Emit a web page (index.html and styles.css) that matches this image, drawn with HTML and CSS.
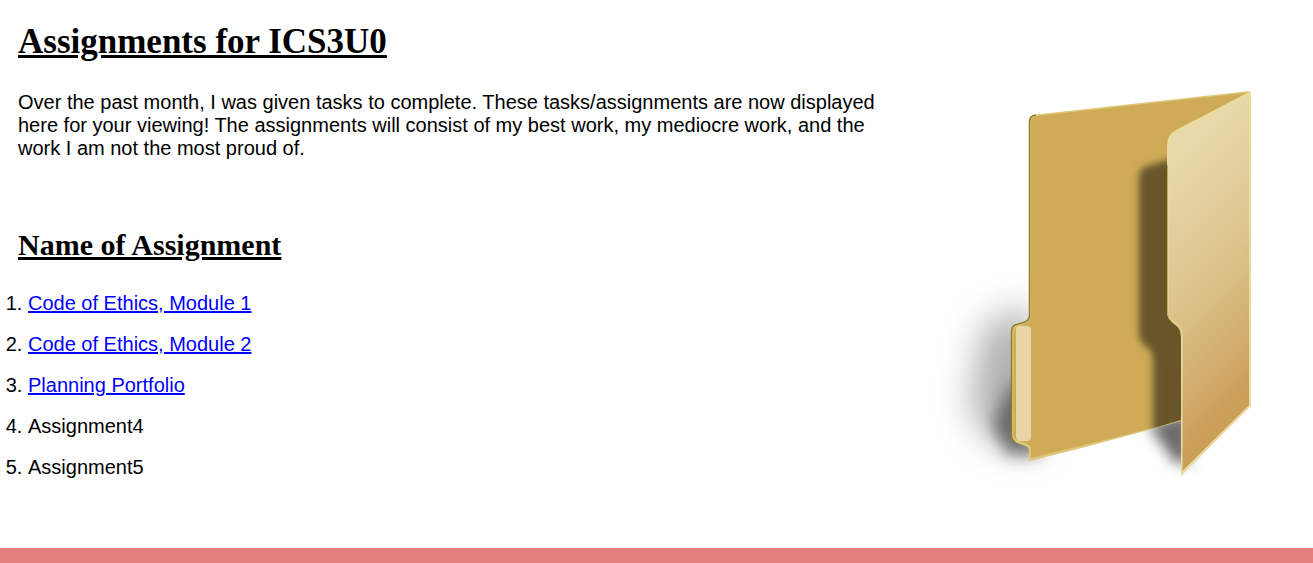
FILE: index.html
```html
<!DOCTYPE html>
<html lang="en">
<head>
<meta charset="utf-8">
<title>Assignments for ICS3U0</title>
<link rel="stylesheet" href="styles.css">
</head>
<body>
<main class="page">
  <section class="content">
    <div class="intro">
      <h1 class="title">Assignments for ICS3U0</h1>
      <p class="lead">Over the past month, I was given tasks to complete. These tasks/assignments are now displayed here for your viewing! The assignments will consist of my best work, my mediocre work, and the work I am not the most proud of.</p>
      <h2 class="subtitle">Name of Assignment</h2>
    </div>
    <ol class="list">
      <li><a href="#">Code of Ethics, Module 1</a></li>
      <li><a href="#">Code of Ethics, Module 2</a></li>
      <li><a href="#">Planning Portfolio</a></li>
      <li>Assignment4</li>
      <li>Assignment5</li>
    </ol>
  </section>
  <aside class="art">
    <svg class="folder" viewBox="920 80 350 410" width="350" height="410" aria-hidden="true">
      <defs>
        <filter id="blurWide" x="-80%" y="-80%" width="260%" height="260%"><feGaussianBlur stdDeviation="18"/></filter>
        <filter id="blurMid" x="-60%" y="-60%" width="220%" height="220%"><feGaussianBlur stdDeviation="8"/></filter>
        <filter id="blurLow" x="-60%" y="-60%" width="220%" height="220%"><feGaussianBlur stdDeviation="7"/></filter>
        <filter id="blurInner" x="-40%" y="-40%" width="180%" height="180%"><feGaussianBlur stdDeviation="3.5"/></filter>
        <linearGradient id="flapFill" gradientUnits="userSpaceOnUse" x1="1100" y1="230" x2="1255" y2="385">
          <stop offset="0" stop-color="#e9d9ab"/>
          <stop offset="0.5" stop-color="#dcc48c"/>
          <stop offset="1" stop-color="#cb9e59"/>
        </linearGradient>
        <clipPath id="backClip"><path d="M1030 122Q1030 115 1037 114L1250 91L1200 140L1181 420C1130 436 1080 447 1030 460V450Q1030 446 1026 445L1016 441Q1012 439 1012 435V332Q1012 327 1016 325L1026 322Q1030 320 1030 315Z"/></clipPath>
      </defs>
      <path class="shadow-soft" filter="url(#blurWide)" d="M1032 305L985 325L970 410L1000 445L1040 445Z"/>
      <path class="shadow-near" filter="url(#blurMid)" d="M1030 375L1012 385L992 425L1008 455L1040 455Z"/>
      <path class="shadow-low" filter="url(#blurLow)" d="M1148 424L1190 412V462L1176 464Z"/>
      <path class="back-light" d="M1029 122Q1029 115 1036 114.500L1250 91L1200 140L1181 421C1130 435 1080 449 1029 461V451Q1029 447 1025 446L1015 442Q1011 440 1011 435V332Q1011 327 1015 325L1025 322Q1029 320 1029 315Z"/>
      <path class="back-dark" d="M1036 115Q1029.500 115.500 1029.500 122V315Q1029.500 320 1025 322L1015 325Q1011.500 327 1011.500 332V435Q1011.500 440 1015 442"/>
      <path class="back" d="M1031 122Q1031 117 1037 116L1250 92.500L1200 140L1181 420C1130 434 1080 446 1031 458V450Q1031 445 1027 444L1017 440Q1013.500 438 1013.500 435V332Q1013.500 328 1017 327L1027 323Q1031 321 1031 315Z"/>
      <g clip-path="url(#backClip)">
        <path class="inner-shadow" filter="url(#blurInner)" d="M1139 176Q1139 168 1148 166L1200 150V470H1153V362Q1153 352 1147 347Q1139 342 1139 334Z"/>
      </g>
      <rect class="tab" x="1016" y="326" width="15" height="115" rx="4"/>
      <path class="flap-edge" d="M1251 91L1176 130Q1167 135 1167 145V312Q1167 318 1172 322L1178 327Q1181 330 1181 334V476L1251 406Z"/>
      <path class="flap-left" d="M1167.500 165V312Q1167.500 318 1172 322L1178 327Q1181 330 1181 336"/>
      <path class="flap" d="M1248 95L1177 132Q1168.500 137 1168.500 146V312Q1168.500 317 1173 321L1179 326Q1182.500 329 1182.500 334V471L1249 405V95Z"/>
    </svg>
  </aside>
</main>
<footer class="bar"></footer>
</body>
</html>
```
FILE: styles.css
```css
html, body {
  margin: 0;
  padding: 0;
  background: #fff;
}
body {
  height: 563px;
  overflow: hidden;
  display: flex;
  flex-direction: column;
  color: #000;
  font-family: "Liberation Sans", Arial, sans-serif;
  font-size: 20px;
}
.page {
  flex: 1;
  display: flex;
  justify-content: space-between;
}
.content {
  width: 880px;
}
.intro {
  padding-left: 18px;
}
.title {
  margin: 0;
  padding-top: 22px;
  font-family: "Liberation Serif", "Times New Roman", serif;
  font-size: 35px;
  line-height: 40px;
  font-weight: 700;
  text-decoration: underline;
}
.lead {
  margin: 29px 0 0;
  line-height: 23px;
}
.subtitle {
  margin: 68px 0 0;
  font-family: "Liberation Serif", "Times New Roman", serif;
  font-size: 30px;
  line-height: 34px;
  font-weight: 700;
  text-decoration: underline;
}
.list {
  margin: 0;
  padding: 12px 0 0 28px;
}
.list li {
  margin-top: 18px;
  line-height: 23px;
}
.list a {
  color: #00f;
}
.art {
  padding: 80px 43px 0 0;
}
.folder {
  display: block;
}
.bar {
  height: 15px;
  flex: none;
  background: #e27f7a;
}
.shadow-soft { fill: #777; opacity: 0.6; }
.shadow-near { fill: #444; opacity: 0.7; }
.shadow-low { fill: #444; opacity: 0.8; }
.back-light { fill: #dcc878; }
.back-dark { fill: none; stroke: #8f7d28; stroke-width: 1.500; }
.back { fill: #cfaa57; }
.inner-shadow { fill: #67562a; }
.tab { fill: #e8d6a6; }
.flap-edge { fill: #e9dca0; }
.flap-left { fill: none; stroke: #c2b050; stroke-width: 1; }
.flap { fill: url(#flapFill); }
```
